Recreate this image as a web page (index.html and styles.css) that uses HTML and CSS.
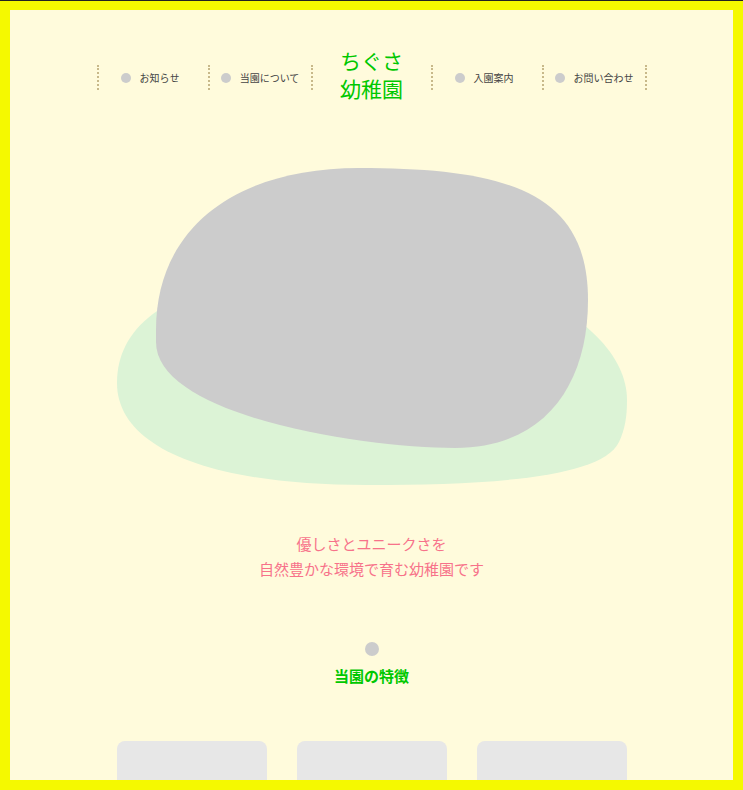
FILE: index.html
```html
<!DOCTYPE html>
<html lang="ja">
<head>
<meta charset="UTF-8" />
<meta name="viewport" content="width=device-width, initial-scale=1.0"/>
<title>ちぐさ幼稚園</title>
<link rel="stylesheet" href="styles.css">
</head>
<body>

<div class="frame"></div>

<header class="header">
  <ul class="nav">
    <li class="nav-item item-a"><span class="dot"></span>お知らせ</li>
    <li class="nav-item item-b before-logo"><span class="dot"></span>当園について</li>
    <li class="logo">ちぐさ<br>幼稚園</li>
    <li class="nav-item item-a"><span class="dot"></span>入園案内</li>
    <li class="nav-item item-b last"><span class="dot"></span>お問い合わせ</li>
  </ul>
</header>

<main>
  <div class="hero">
    <svg width="510" height="320" viewBox="0 0 510 320">
      <path fill="#dcf3d6" d="M 0 216 C 0 140, 90 100, 260 100 C 420 100, 510 170, 510 233 C 510 250, 508 262, 502 275 C 485 310, 380 318, 250 318 C 90 318, 0 280, 0 216 Z"/>
      <path fill="#cccccc" d="M 242 1 C 390 1, 471 25, 471 133 C 471 215, 430 281, 338 281 C 250 281, 39 250, 39 175 L 39 163 C 39 60, 120 1, 242 1 Z"/>
    </svg>
  </div>

  <p class="tagline">優しさとユニークさを<br>自然豊かな環境で育む幼稚園です</p>

  <section class="features">
    <span class="big-dot"></span>
    <h2 class="section-title">当園の特徴</h2>
    <div class="cards">
      <div class="card"></div>
      <div class="card"></div>
      <div class="card"></div>
    </div>
  </section>
</main>

</body>
</html>
```

FILE: styles.css
```css
body {
  margin: 0;
  background-color: #fffbdc;
  font-family: "Noto Sans CJK JP", sans-serif;
  color: #444;
}
.frame {
  position: fixed;
  top: 0;
  left: 0;
  right: 0;
  bottom: 0;
  border: 10px solid #f5f900;
  border-top-width: 9px;
  box-shadow: 0 -1px 0 #222;
  margin-top: 1px;
  pointer-events: none;
  z-index: 10;
}
.header {
  padding-top: 46px;
}
.nav {
  list-style: none;
  margin: 0;
  padding: 0;
  display: flex;
  justify-content: center;
  align-items: center;
}
.nav-item {
  height: 25px;
  margin-top: 7px;
  box-sizing: border-box;
  border-left: 2px dotted #c8b98a;
  display: flex;
  align-items: center;
  justify-content: center;
  gap: 9px;
  font-size: 10px;
  color: #444;
}
.item-a {
  width: 111px;
  padding-right: 6px;
}
.item-b {
  width: 105px;
}
.before-logo,
.last {
  border-right: 2px dotted #c8b98a;
}
.dot {
  width: 10px;
  height: 10px;
  border-radius: 50%;
  background-color: #cccccc;
}
.logo {
  width: 118px;
  text-align: center;
  font-size: 21px;
  line-height: 28px;
  color: #00c800;
}
.hero {
  margin-top: 65px;
  display: flex;
  justify-content: center;
}
.hero svg {
  display: block;
}
.tagline {
  margin: 44px 0 0;
  text-align: center;
  font-size: 15px;
  line-height: 25px;
  color: #f7728a;
}
.features {
  margin-top: 61px;
  display: flex;
  flex-direction: column;
  align-items: center;
}
.big-dot {
  width: 14px;
  height: 14px;
  border-radius: 50%;
  background-color: #cccccc;
}
.section-title {
  margin: 10px 0 0;
  font-size: 15px;
  line-height: 20px;
  font-weight: bold;
  color: #00c800;
}
.cards {
  margin-top: 55px;
  display: flex;
  gap: 30px;
}
.card {
  width: 150px;
  height: 200px;
  border-radius: 8px;
  background-color: #e7e7e7;
}
```
